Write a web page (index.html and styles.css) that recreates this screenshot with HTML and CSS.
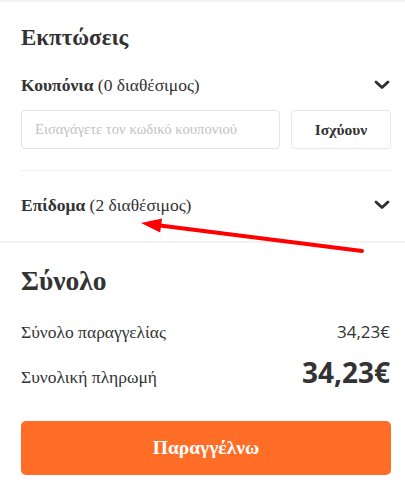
FILE: index.html
```html
<!DOCTYPE html>
<html lang="el">
<head>
<meta charset="utf-8">
<title>Σύνολο</title>
<link rel="stylesheet" href="styles.css">
</head>
<body>
<div class="page">
  <section class="discounts">
    <h2 class="title">Εκπτώσεις</h2>
    <div class="toggle-row">
      <span><b>Κουπόνια</b> (0 διαθέσιμος)</span>
      <svg class="chev" width="16" height="10" viewBox="0 0 16 10"><path d="M2 2 L8 7.5 L14 2" fill="none" stroke="#2f2f2f" stroke-width="2.8" stroke-linecap="round" stroke-linejoin="round"/></svg>
    </div>
    <div class="coupon-form">
      <input class="coupon-input" type="text" placeholder="Εισαγάγετε τον κωδικό κουπονιού">
      <button class="apply-btn" type="button">Ισχύουν</button>
    </div>
    <div class="divider"></div>
    <div class="toggle-row epidoma">
      <span><b>Επίδομα</b> (2 διαθέσιμος)</span>
      <svg class="chev" width="16" height="10" viewBox="0 0 16 10"><path d="M2 2 L8 7.5 L14 2" fill="none" stroke="#2f2f2f" stroke-width="2.8" stroke-linecap="round" stroke-linejoin="round"/></svg>
    </div>
  </section>
  <section class="total">
    <h2 class="title big">Σύνολο</h2>
    <div class="sum-row">
      <span class="label">Σύνολο παραγγελίας</span>
      <span class="price">34,23€</span>
    </div>
    <div class="sum-row pay">
      <span class="label">Συνολική πληρωμή</span>
      <span class="price strong">34,23€</span>
    </div>
    <button class="order-btn" type="button">Παραγγέλνω</button>
  </section>
  <svg class="arrow" width="405" height="488" viewBox="0 0 405 488">
    <line x1="362" y1="251" x2="158" y2="225.3" stroke="#ff0000" stroke-width="4" stroke-linecap="round"/>
    <polygon points="141,223 162,218.6 160.2,232.4" fill="#ff0000"/>
  </svg>
</div>
</body>
</html>
```
FILE: styles.css
```css
html, body {
  margin: 0;
  padding: 0;
  background: #ffffff;
}
body {
  font-family: "Liberation Serif", "Times New Roman", serif;
  color: #333333;
}
.page {
  position: relative;
  width: 405px;
  min-height: 488px;
  border-top: 2px solid #f4f4f4;
}
.discounts {
  padding: 21px 14px 24px 21px;
  border-bottom: 2px solid #f2f2f2;
}
.title {
  margin: 0;
  font-size: 23px;
  line-height: 30px;
  font-weight: bold;
  color: #333333;
}
.toggle-row {
  display: flex;
  justify-content: space-between;
  align-items: center;
  margin-top: 20px;
  font-size: 17.5px;
  line-height: 24px;
  color: #333333;
}
.toggle-row b {
  font-weight: bold;
}
.chev {
  display: block;
  margin-right: 1px;
}
.coupon-form {
  display: flex;
  gap: 11px;
  margin-top: 13px;
}
.coupon-input {
  flex: 1;
  min-width: 0;
  height: 39px;
  box-sizing: border-box;
  border: 1px solid #e4e4e4;
  border-radius: 4px;
  padding: 0 13px;
  font-family: "Liberation Serif", "Times New Roman", serif;
  font-size: 14.7px;
  color: #333333;
  outline: none;
}
.coupon-input::placeholder {
  color: #c2c2c2;
}
.apply-btn {
  width: 100px;
  height: 39px;
  box-sizing: border-box;
  border: 1px solid #e8e8e8;
  border-radius: 4px;
  background: #ffffff;
  font-family: "Liberation Serif", "Times New Roman", serif;
  font-weight: bold;
  font-size: 15.5px;
  color: #333333;
}
.divider {
  height: 1px;
  background: #efefef;
  margin-top: 21px;
}
.toggle-row.epidoma {
  margin-top: 22px;
}
.total {
  padding: 22px 14px 0 21px;
}
.title.big {
  font-size: 27.5px;
  line-height: 32px;
}
.sum-row {
  display: flex;
  justify-content: space-between;
  align-items: baseline;
  margin-top: 23px;
  line-height: 24px;
}
.sum-row.pay {
  margin-top: 11px;
  line-height: 34px;
}
.label {
  font-size: 17.5px;
  color: #333333;
}
.price {
  font-family: "Open Sans", "Liberation Sans", sans-serif;
  font-size: 17px;
  color: #333333;
  margin-right: 1px;
}
.price.strong {
  font-size: 28px;
  font-weight: bold;
}
.order-btn {
  display: block;
  width: 100%;
  height: 54px;
  margin-top: 27px;
  border: none;
  border-radius: 5px;
  background: #ff6d26;
  color: #ffffff;
  font-family: "Liberation Serif", "Times New Roman", serif;
  font-weight: bold;
  font-size: 19.5px;
}
.arrow {
  position: absolute;
  left: 0;
  top: -2px;
  pointer-events: none;
}
```
